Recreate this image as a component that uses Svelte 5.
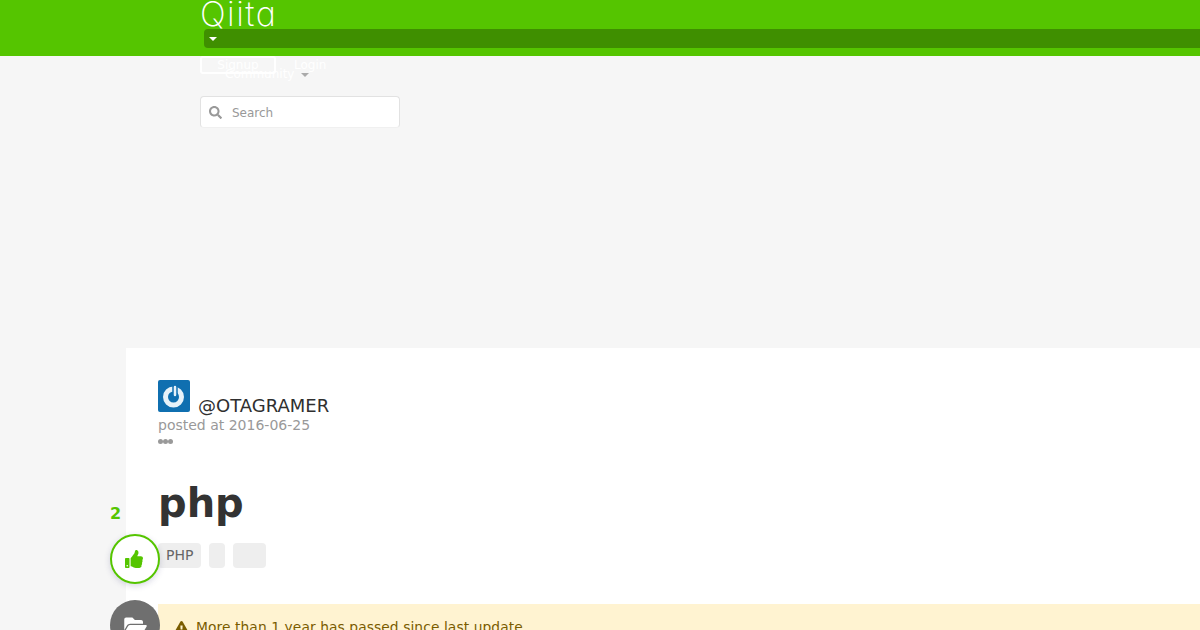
<script lang="ts">
  const tags = [
    { label: "PHP", width: 43 },
    { label: "", width: 16 },
    { label: "", width: 33 }
  ];
</script>

<div class="page">
  <header class="topbar">
    <div class="logo">Qiita</div>
    <div class="scope">
      <span class="caret"></span>
    </div>
  </header>

  <nav class="subnav">
    <div class="auth">
      <a class="signup" href="#signup">Signup</a>
      <a class="login" href="#login">Login</a>
    </div>
    <div class="community">
      Community
      <span class="caret grey"></span>
    </div>
    <label class="search">
      <svg viewBox="0 0 512 512" width="13" height="13" aria-hidden="true">
        <path
          fill="#999"
          d="M505 442.700 405.300 343c-4.500-4.500-10.600-7-17-7H372c27.600-35.300 44-79.700 44-128C416 93.100 322.900 0 208 0S0 93.100 0 208s93.100 208 208 208c48.300 0 92.700-16.400 128-44v16.300c0 6.400 2.500 12.500 7 17l99.700 99.700c9.400 9.400 24.600 9.400 33.900 0l28.300-28.300c9.400-9.400 9.400-24.600.1-34zM208 336c-70.700 0-128-57.200-128-128 0-70.700 57.200-128 128-128 70.700 0 128 57.200 128 128 0 70.700-57.200 128-128 128z"
        />
      </svg>
      <span>Search</span>
    </label>
  </nav>

  <main class="article">
    <aside class="actions">
      <div class="count">2</div>
      <button class="round like" aria-label="Like">
        <svg viewBox="0 0 512 512" width="18" height="18" aria-hidden="true">
          <path
            fill="#55c500"
            d="M104 224H24c-13.300 0-24 10.700-24 24v240c0 13.300 10.700 24 24 24h80c13.300 0 24-10.700 24-24V248c0-13.300-10.700-24-24-24zM64 472c-13.300 0-24-10.700-24-24s10.700-24 24-24 24 10.700 24 24-10.700 24-24 24zM384 81.500c0 42.400-26 66.200-33.300 94.500h101.700c33.400 0 59.400 27.700 59.600 58 .1 17.900-7.500 37.200-19.400 49.200l-.1.100c9.800 23.300 8.200 56-9.300 79.400 8.700 25.900-.1 57.700-16.400 74.800 4.300 17.600 2.200 32.600-6.100 44.700C440.200 511.600 389.600 512 346.800 512l-2.800 0c-48.300 0-87.800-17.600-119.600-31.700-16-7.100-36.800-15.900-52.700-16.200-6.500-.1-11.700-5.400-11.700-11.900V238.300c0-3.200 1.300-6.300 3.600-8.500 39.600-39.100 56.600-80.500 89.100-113 14.800-14.800 20.200-37.200 25.400-58.900C282.500 39.300 291.800 0 312 0c24 0 72 8 72 81.500z"
          />
        </svg>
      </button>
      <button class="round stock" aria-label="Stock">
        <svg viewBox="0 0 576 512" width="23" height="20" aria-hidden="true">
          <path
            fill="#fff"
            d="M572.700 292.100 500.300 416.200A63.990 63.990 0 0 1 445 448H45c-18.500 0-30.100-20.100-20.700-36.100l72.400-124.200A64 64 0 0 1 152 256h400c18.500 0 30.100 20.100 20.700 36.100zM152 224h328v-48c0-26.500-21.500-48-48-48H272l-64-64H48C21.500 64 0 85.500 0 112v278l69.100-118.400C86.200 242.300 118 224 152 224z"
          />
        </svg>
      </button>
    </aside>

    <div class="author">
      <div class="avatar">
        <svg viewBox="0 0 32 32" width="32" height="32" aria-hidden="true">
          <rect width="32" height="32" fill="#0f6fb0" />
          <circle cx="15.500" cy="17" r="8" fill="none" stroke="#e6f2f9" stroke-width="5" />
          <rect x="15" y="5" width="4" height="12" rx="2" fill="#e6f2f9" stroke="#0f6fb0" stroke-width="1.500" />
        </svg>
      </div>
      <span class="name">@OTAGRAMER</span>
    </div>
    <div class="posted">posted at 2016-06-25</div>
    <div class="dots"><i></i><i></i><i></i></div>

    <h1>php</h1>

    <ul class="tags">
      {#each tags as tag}
        <li style={`width: ${tag.width}px`}>{tag.label}</li>
      {/each}
    </ul>

    <div class="notice">
      <svg viewBox="0 0 576 512" width="15" height="13" aria-hidden="true">
        <path
          fill="#7a5c00"
          d="M569.500 440C588 472 564.800 512 527.900 512H48.100c-37 0-60.100-40-41.600-72L246.400 24c18.500-32 64.700-32 83.200 0l239.900 416zM288 354c-25.400 0-46 20.600-46 46s20.600 46 46 46 46-20.600 46-46-20.600-46-46-46zm-43.700-165.300 7.400 136c.3 6.400 5.600 11.300 12 11.300h48.500c6.400 0 11.600-5 12-11.300l7.400-136c.4-6.900-5.100-12.700-12-12.700h-63.400c-6.900 0-12.400 5.800-12 12.700z"
        />
      </svg>
      <span>More than 1 year has passed since last update.</span>
    </div>
  </main>
</div>

<style>
  :global(body) {
    margin: 0;
    background: #f6f6f6;
    font-family: "DejaVu Sans", sans-serif;
  }

  .page {
    width: 1200px;
    height: 630px;
    overflow: hidden;
    position: relative;
    background: #f6f6f6;
  }

  .topbar {
    height: 56px;
    box-sizing: border-box;
    background: #55c500;
    padding-left: 200px;
    overflow: hidden;
  }

  .logo {
    height: 29px;
    font-family: "Inter", sans-serif;
    font-feature-settings: "cv11";
    font-weight: 200;
    font-size: 34px;
    line-height: 27px;
    letter-spacing: 1.500px;
    color: #fff;
  }

  .scope {
    margin-left: 4px;
    height: 19px;
    background: #3f8f00;
    border-radius: 4px 0 0 4px;
    display: flex;
    align-items: center;
    padding-left: 5px;
  }

  .caret {
    display: inline-block;
    width: 0;
    height: 0;
    border-left: 4px solid transparent;
    border-right: 4px solid transparent;
    border-top: 4px solid #fff;
  }

  .caret.grey {
    border-top-color: #aaa;
    margin-left: 3px;
    vertical-align: middle;
  }

  .subnav {
    height: 292px;
    box-sizing: border-box;
    padding-left: 200px;
    position: relative;
  }

  .auth {
    display: flex;
    align-items: center;
    height: 17px;
    font-size: 12px;
    color: #fff;
  }

  .signup {
    width: 76px;
    height: 18px;
    box-sizing: border-box;
    border: 2px solid #fff;
    border-radius: 3px;
    color: #fff;
    text-align: center;
    line-height: 14px;
    text-decoration: none;
  }

  .login {
    margin-left: 18px;
    color: #fff;
    text-decoration: none;
  }

  .community {
    position: absolute;
    left: 225px;
    top: 11px;
    font-size: 12px;
    line-height: 15px;
    color: #fff;
  }

  .search {
    margin-top: 23px;
    width: 200px;
    height: 32px;
    box-sizing: border-box;
    background: #fff;
    border: 1px solid #e2e2e2;
    border-bottom-color: #f0f0f0;
    border-radius: 4px;
    display: flex;
    align-items: center;
    padding-left: 8px;
    gap: 10px;
    font-size: 12px;
    color: #999;
  }

  .search span {
    margin-top: 1px;
  }

  .article {
    position: relative;
    margin-left: 126px;
    height: 400px;
    box-sizing: border-box;
    background: #fff;
    padding: 32px 0 0 32px;
  }

  .actions {
    position: absolute;
    z-index: 1;
    left: -16px;
    top: 156px;
    width: 50px;
    display: flex;
    flex-direction: column;
    align-items: flex-start;
  }

  .count {
    width: 11px;
    text-align: center;
    font-size: 16px;
    line-height: 20px;
    font-weight: 700;
    color: #55c500;
    margin-bottom: 10px;
  }

  .round {
    width: 50px;
    height: 50px;
    flex: none;
    padding: 0;
    border-radius: 50%;
    display: flex;
    align-items: center;
    justify-content: center;
    box-sizing: border-box;
  }

  .like {
    background: #fff;
    border: 2px solid #55c500;
    box-shadow: 0 2px 6px rgba(60, 60, 120, 0.2);
    margin-bottom: 16px;
  }

  .like svg {
    margin-left: -2px;
  }

  .stock {
    background: #6f6f6f;
    border: none;
  }

  .author {
    display: flex;
    align-items: flex-end;
    height: 32px;
  }

  .avatar {
    width: 32px;
    height: 32px;
    border-radius: 2px;
    overflow: hidden;
  }

  .avatar svg {
    display: block;
  }

  .name {
    margin-left: 8px;
    font-size: 18px;
    line-height: 21px;
    margin-bottom: -4px;
    color: #2f2f2f;
  }

  .posted {
    margin-top: 4px;
    font-size: 14px;
    line-height: 18px;
    color: #999;
  }

  .dots {
    display: flex;
    gap: 0;
    margin-top: 5px;
  }

  .dots i {
    width: 5px;
    height: 5px;
    background: #999;
    border-radius: 50%;
  }

  h1 {
    margin: 35px 0 0;
    font-size: 40px;
    line-height: 48px;
    font-weight: 700;
    color: #333;
  }

  .tags {
    list-style: none;
    margin: 16px 0 0;
    padding: 0;
    display: flex;
    gap: 8px;
  }

  .tags li {
    height: 25px;
    box-sizing: border-box;
    padding-left: 8px;
    background: #eee;
    border-radius: 4px;
    font-size: 14px;
    line-height: 25px;
    color: #666;
  }

  .notice {
    margin-top: 36px;
    height: 60px;
    background: #fff3d1;
    padding: 14px 0 0 16px;
    box-sizing: border-box;
    display: flex;
    align-items: flex-start;
    gap: 7px;
    font-size: 13.800px;
    letter-spacing: 0.090px;
    line-height: 19px;
    color: #7a5c00;
  }

  .notice svg {
    margin-top: 3px;
  }
</style>
